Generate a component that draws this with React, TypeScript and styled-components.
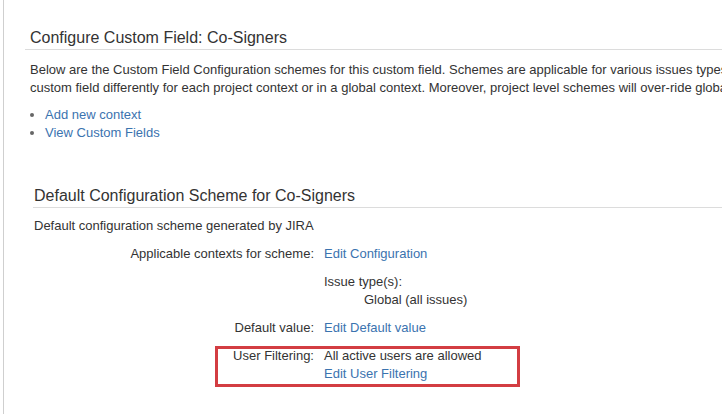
import React, { FC } from "react";
import styled, { createGlobalStyle } from "styled-components";

const GlobalStyle = createGlobalStyle`
  html, body {
    margin: 0;
    padding: 0;
    background: #fff;
  }
  body {
    font-family: "Liberation Sans", Arial, sans-serif;
    font-size: 13px;
    line-height: 18px;
    color: #333;
  }
`;

const Page = styled.div`
  margin-left: 3px;
  border-left: 1px solid #cfcfcf;
  min-height: 100vh;
  padding: 1px 0 0 21px;
  box-sizing: border-box;
  overflow: hidden;
`;

const Title = styled.h2`
  margin: 27px 0 0;
  padding: 0 0 1px 5px;
  font-size: 16px;
  line-height: 20px;
  font-weight: normal;
  color: #333;
  border-bottom: 1px solid #dcdcdc;
  white-space: nowrap;
`;

const Intro = styled.p`
  margin: 11px 0 0;
  padding-left: 5px;
  white-space: nowrap;
`;

const Links = styled.ul`
  margin: 9px 0 0;
  padding-left: 20px;
  list-style: disc;
  color: #666;
`;

const Link = styled.a`
  color: #3b73af;
  text-decoration: none;
  cursor: pointer;
`;

const Scheme = styled.section`
  margin: 43px 0 0 8px;
`;

const SchemeTitle = styled.h3`
  margin: 0;
  padding: 1px 0 1px 1px;
  font-size: 16px;
  line-height: 20px;
  font-weight: normal;
  color: #333;
  border-bottom: 1px solid #dcdcdc;
  white-space: nowrap;
`;

const Description = styled.p`
  margin: 9px 0 0;
  padding-left: 1px;
`;

const Table = styled.div`
  margin-top: 5px;
  display: flex;
  flex-direction: column;
`;

const Row = styled.div<{ $highlight?: boolean }>`
  position: relative;
  display: grid;
  grid-template-columns: 281px 1fr;
  column-gap: 10px;
  padding: 5px 0;

  ${({ $highlight }) =>
    $highlight &&
    `
    &::after {
      content: "";
      position: absolute;
      left: 182px;
      top: 4px;
      width: 305px;
      height: 41px;
      border: 3px solid #d33d42;
      box-sizing: border-box;
      pointer-events: none;
    }
  `}
`;

const Label = styled.div`
  text-align: right;
  white-space: nowrap;
`;

const Value = styled.div`
  display: flex;
  flex-direction: column;
  white-space: nowrap;
`;

const Indented = styled.span`
  padding-left: 40px;
`;

const App: FC = () => {
  return (
    <>
      <GlobalStyle />
      <Page>
        <Title>Configure Custom Field: Co-Signers</Title>
        <Intro>
          Below are the Custom Field Configuration schemes for this custom field. Schemes are
          applicable for various issues types and projects.
          <br />
          custom field differently for each project context or in a global context. Moreover,
          project level schemes will over-ride global schemes.
        </Intro>
        <Links>
          <li>
            <Link>Add new context</Link>
          </li>
          <li>
            <Link>View Custom Fields</Link>
          </li>
        </Links>

        <Scheme>
          <SchemeTitle>Default Configuration Scheme for Co-Signers</SchemeTitle>
          <Description>Default configuration scheme generated by JIRA</Description>
          <Table>
            <Row>
              <Label>Applicable contexts for scheme:</Label>
              <Value>
                <Link>Edit Configuration</Link>
              </Value>
            </Row>
            <Row>
              <Label />
              <Value>
                <span>Issue type(s):</span>
                <Indented>Global (all issues)</Indented>
              </Value>
            </Row>
            <Row>
              <Label>Default value:</Label>
              <Value>
                <Link>Edit Default value</Link>
              </Value>
            </Row>
            <Row $highlight>
              <Label>User Filtering:</Label>
              <Value>
                <span>All active users are allowed</span>
                <Link>Edit User Filtering</Link>
              </Value>
            </Row>
          </Table>
        </Scheme>
      </Page>
    </>
  );
};

export default App;
